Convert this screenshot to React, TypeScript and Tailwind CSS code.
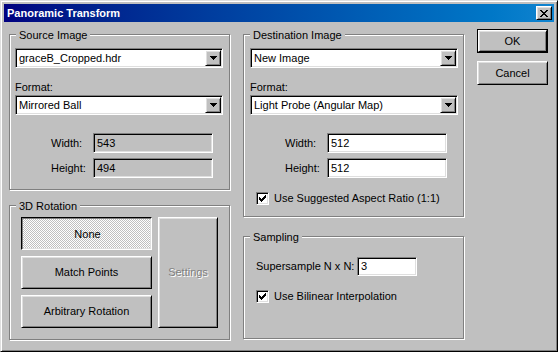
import React from 'react';

const sunken =
  'border border-t-[#808080] border-l-[#808080] border-r-white border-b-white shadow-[inset_1px_1px_0_#000,inset_-1px_-1px_0_#dfdfdf]';
const raised =
  'border border-t-white border-l-white border-r-black border-b-black shadow-[inset_1px_1px_0_#dfdfdf,inset_-1px_-1px_0_#808080]';
const pressed =
  'border border-t-black border-l-black border-r-white border-b-white shadow-[inset_1px_1px_0_#808080,inset_-1px_-1px_0_#dfdfdf]';

const Group: React.FC<{ title: string; className?: string; children?: React.ReactNode }> = ({
  title,
  className = '',
  children,
}) => (
  <div className={`relative border border-[#808080] shadow-[inset_1px_1px_0_#fff,1px_1px_0_#fff] ${className}`}>
    <span className="absolute left-[6px] top-[-6px] px-[3px] bg-[#c0c0c0] leading-[13px] whitespace-nowrap">
      {title}
    </span>
    {children}
  </div>
);

const Combo: React.FC<{ value: string }> = ({ value }) => (
  <div className={`${sunken} bg-white h-[20px] w-[208px] flex items-center`}>
    <span className="flex-1 pl-[3px] leading-[13px] whitespace-nowrap overflow-hidden">{value}</span>
    <div className={`${raised} bg-[#c0c0c0] w-[16px] h-[16px] mr-[1px] flex items-center justify-center`}>
      <svg width="7" height="4" viewBox="0 0 7 4" shapeRendering="crispEdges">
        <path d="M0 0h7v1H0zM1 1h5v1H1zM2 2h3v1H2zM3 3h1v1H3z" fill="#000" />
      </svg>
    </div>
  </div>
);

const Field: React.FC<{ value: string; disabled?: boolean; className?: string }> = ({
  value,
  disabled,
  className = '',
}) => (
  <div
    className={`${sunken} ${disabled ? 'bg-[#c0c0c0]' : 'bg-white'} flex items-center pl-[3px] leading-[13px] ${className}`}
  >
    {value}
  </div>
);

const Check: React.FC<{ label: string }> = ({ label }) => (
  <div className="flex items-center gap-[5px]">
    <div className={`${sunken} bg-white w-[13px] h-[13px] flex items-center justify-center`}>
      <svg width="7" height="7" viewBox="0 0 7 7" shapeRendering="crispEdges">
        <path
          d="M6 0h1v1H6zM5 1h2v1H5zM0 2h1v1H0zM4 2h3v1H4zM0 3h2v1H0zM3 3h3v1H3zM0 4h5v1H0zM1 5h3v1H1zM2 6h1v1H2z"
          fill="#000"
        />
      </svg>
    </div>
    <span className="leading-[13px] whitespace-nowrap">{label}</span>
  </div>
);

const Btn: React.FC<{ label: string; className?: string; disabled?: boolean }> = ({
  label,
  className = '',
  disabled,
}) => (
  <div className={`${raised} bg-[#c0c0c0] flex items-center justify-center ${className}`}>
    <span
      className={
        disabled ? 'text-[#808080] [text-shadow:1px_1px_0_#fff] leading-[13px]' : 'leading-[13px]'
      }
    >
      {label}
    </span>
  </div>
);

export default function App() {
  return (
    <div className="w-[558px] h-[352px] bg-[#c0c0c0] border border-t-[#dfdfdf] border-l-[#dfdfdf] border-r-black border-b-black shadow-[inset_1px_1px_0_#fff,inset_-1px_-1px_0_#808080] p-[3px] flex flex-col font-['Liberation_Sans',Arial,sans-serif] text-[11px] text-black select-none">
      {/* title bar */}
      <div className="h-[18px] bg-gradient-to-r from-[#000080] to-[#1084d0] flex items-center justify-between pl-[3px] pr-[2px]">
        <span className="text-white font-bold leading-[13px] text-[11px]">Panoramic Transform</span>
        <div className={`${raised} bg-[#c0c0c0] w-[16px] h-[14px] flex items-center justify-center`}>
          <svg width="8" height="7" viewBox="0 0 8 7" shapeRendering="crispEdges">
            <path
              d="M0 0h2v1H0zM6 0h2v1H6zM1 1h2v1H1zM5 1h2v1H5zM2 2h4v1H2zM3 3h2v1H3zM2 4h4v1H2zM1 5h2v1H1zM5 5h2v1H5zM0 6h2v1H0zM6 6h2v1H6z"
              fill="#000"
            />
          </svg>
        </div>
      </div>

      <div className="flex pl-[5px]">
        {/* left column */}
        <div className="w-[222px] pt-[12px] flex flex-col">
          <Group title="Source Image" className="w-[221px] h-[156px] pl-[5px] pt-[13px] flex flex-col">
            <Combo value="graceB_Cropped.hdr" />
            <span className="mt-[13px] leading-[13px]">Format:</span>
            <div className="mt-[1px]">
              <Combo value="Mirrored Ball" />
            </div>
            <div className="mt-[18px] flex items-center ml-[36px]">
              <span className="w-[42px] leading-[13px]">Width:</span>
              <Field value="543" disabled className="w-[120px] h-[20px]" />
            </div>
            <div className="mt-[5px] flex items-center ml-[36px]">
              <span className="w-[42px] leading-[13px]">Height:</span>
              <Field value="494" disabled className="w-[120px] h-[20px]" />
            </div>
          </Group>

          <Group title="3D Rotation" className="w-[221px] h-[135px] mt-[15px] pl-[11px] pt-[11px] flex gap-[6px]">
            <div className="w-[131px] flex flex-col gap-[6px]">
              <div
                className={`${pressed} h-[33px] flex items-center justify-center bg-[image:repeating-conic-gradient(#fff_0_25%,#c0c0c0_0_50%)] bg-[length:2px_2px]`}
              >
                <span className="leading-[13px] translate-x-[1px] translate-y-[1px]">None</span>
              </div>
              <Btn label="Match Points" className="h-[33px]" />
              <Btn label="Arbitrary Rotation" className="h-[33px]" />
            </div>
            <Btn label="Settings" disabled className="w-[60px] h-[111px]" />
          </Group>
        </div>

        {/* right column */}
        <div className="w-[222px] ml-[12px] pt-[12px] flex flex-col">
          <Group title="Destination Image" className="w-[221px] h-[183px] pl-[6px] pt-[13px] flex flex-col">
            <Combo value="New Image" />
            <span className="mt-[13px] leading-[13px]">Format:</span>
            <div className="mt-[1px]">
              <Combo value="Light Probe (Angular Map)" />
            </div>
            <div className="mt-[18px] flex items-center ml-[35px]">
              <span className="w-[42px] leading-[13px]">Width:</span>
              <Field value="512" className="w-[120px] h-[20px]" />
            </div>
            <div className="mt-[5px] flex items-center ml-[35px]">
              <span className="w-[42px] leading-[13px]">Height:</span>
              <Field value="512" className="w-[120px] h-[20px]" />
            </div>
            <div className="mt-[14px] ml-[6px]">
              <Check label="Use Suggested Aspect Ratio (1:1)" />
            </div>
          </Group>

          <Group title="Sampling" className="w-[221px] h-[103px] mt-[19px] pl-[12px] pt-[20px] flex flex-col">
            <div className="flex items-center">
              <span className="w-[101px] leading-[13px] whitespace-nowrap">Supersample N x N:</span>
              <Field value="3" className="w-[60px] h-[19px]" />
            </div>
            <div className="mt-[14px]">
              <Check label="Use Bilinear Interpolation" />
            </div>
          </Group>
        </div>

        {/* buttons */}
        <div className="w-[71px] ml-[12px] pt-[7px] flex flex-col gap-[8px]">
          <div className="border border-black h-[24px] flex">
            <Btn label="OK" className="flex-1" />
          </div>
          <Btn label="Cancel" className="h-[24px]" />
        </div>
      </div>
    </div>
  );
}
